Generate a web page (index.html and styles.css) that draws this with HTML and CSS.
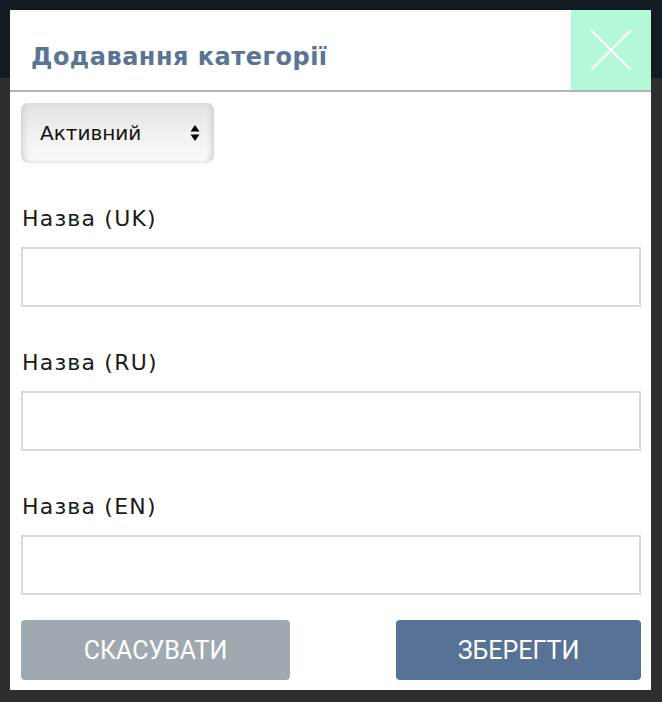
FILE: index.html
```html
<!DOCTYPE html>
<html lang="uk">
<head>
<meta charset="utf-8">
<title>Додавання категорії</title>
<link rel="stylesheet" href="styles.css">
</head>
<body>
<div class="backdrop">
  <div class="backdrop-top"></div>
  <div class="backdrop-rest"></div>
</div>
<div class="modal">
  <div class="modal-header">
    <h1 class="modal-title">Додавання категорії</h1>
    <button class="close-btn" aria-label="Закрити">
      <svg width="42" height="42" viewBox="0 0 42 42"><path d="M1 1 L41 41 M41 1 L1 41" stroke="#fff" stroke-width="2.4" fill="none"/></svg>
    </button>
  </div>
  <div class="modal-body">
    <div class="select">
      <span class="select-text">Активний</span>
      <svg class="select-arrows" width="10" height="18" viewBox="0 0 10 18"><path d="M5 1 L9.5 7.5 L0.5 7.5 Z M5 17 L9.5 10.5 L0.5 10.5 Z" fill="#000"/></svg>
    </div>
    <div class="field">
      <label class="field-label">Назва (UK)</label>
      <div class="input"></div>
    </div>
    <div class="field">
      <label class="field-label">Назва (RU)</label>
      <div class="input"></div>
    </div>
    <div class="field">
      <label class="field-label">Назва (EN)</label>
      <div class="input"></div>
    </div>
    <div class="actions">
      <button class="btn btn-cancel">СКАСУВАТИ</button>
      <button class="btn btn-save">ЗБЕРЕГТИ</button>
    </div>
  </div>
</div>
</body>
</html>
```
FILE: styles.css
```css
* { box-sizing: border-box; }
html, body { margin: 0; padding: 0; }
body {
  width: 662px;
  height: 702px;
  overflow: hidden;
  background: #2e2f31;
  font-family: "DejaVu Sans", "Liberation Sans", sans-serif;
  position: relative;
}
.backdrop { display: flex; flex-direction: column; height: 702px; }
.backdrop-top { height: 78px; background: #141a22; }
.backdrop-rest { flex: 1; background: #2d2e30; }

.modal {
  position: absolute;
  left: 10px;
  top: 10px;
  width: 641px;
  height: 680px;
  background: #fff;
  display: flex;
  flex-direction: column;
}
.modal-header {
  height: 82px;
  border-bottom: 2px solid #b1b4ba;
  display: flex;
  align-items: flex-start;
  justify-content: space-between;
}
.modal-title {
  margin: 32px 0 0 21px;
  font-size: 24px;
  line-height: 30px;
  font-weight: bold;
  letter-spacing: 0.5px;
  color: #5b7395;
}
.close-btn {
  width: 80px;
  height: 80px;
  background: #b3f9d9;
  border: 0;
  padding: 0;
  display: flex;
  align-items: center;
  justify-content: center;
}
.modal-body {
  padding: 11px 10px 10px 11px;
  display: flex;
  flex-direction: column;
  flex: 1;
}
.select {
  width: 193px;
  height: 59px;
  border-radius: 7px;
  background: linear-gradient(to bottom, #e1e1e1 0%, #f2f2f2 55%, #f8f8f8 100%);
  box-shadow: inset 6px 0 6px -4px #cdcdcd, inset -6px 0 6px -4px #cdcdcd, 0 1px 1px #e4e4e4;
  display: flex;
  align-items: center;
  justify-content: space-between;
  padding: 0 14px 0 19px;
}
.select-text {
  font-size: 20px;
  color: #111;
}
.field {
  display: flex;
  flex-direction: column;
  margin-top: 44px;
}
.field + .field { margin-top: 43px; }
.field-label {
  font-size: 22px;
  line-height: 26px;
  letter-spacing: 1.2px;
  color: #1a1a1a;
  margin-left: 1px;
}
.input {
  margin-top: 15px;
  height: 60px;
  border: 2px solid #d8d9dc;
}
.actions {
  margin-top: auto;
  display: flex;
  justify-content: space-between;
}
.btn {
  height: 60px;
  border: 0;
  border-radius: 4px;
  color: #fff;
  font-family: Roboto, "Liberation Sans", sans-serif;
  font-size: 25px;
}
.btn-cancel { width: 269px; background: #a0a9b0; }
.btn-save { width: 245px; background: #587296; }
```
